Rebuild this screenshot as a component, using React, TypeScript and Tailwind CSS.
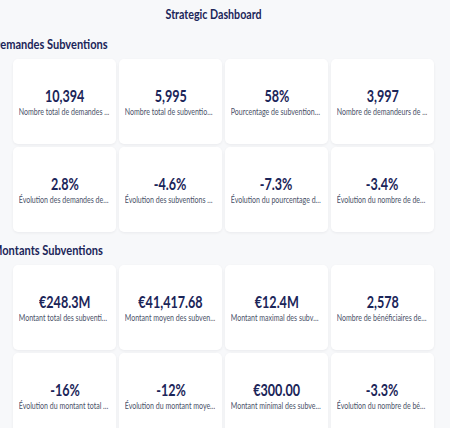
const sections = [
  {
    title: "Demandes Subventions",
    cards: [
      { value: "10,394", label: "Nombre total de demandes de subventions" },
      { value: "5,995", label: "Nombre total de subventions accordées" },
      { value: "58%", label: "Pourcentage de subventions accordées" },
      { value: "3,997", label: "Nombre de demandeurs de subventions" },
      { value: "2.8%", label: "Évolution des demandes de subventions" },
      { value: "-4.6%", label: "Évolution des subventions accordées" },
      { value: "-7.3%", label: "Évolution du pourcentage de subventions" },
      { value: "-3.4%", label: "Évolution du nombre de demandeurs" },
    ],
  },
  {
    title: "Montants Subventions",
    cards: [
      { value: "€248.3M", label: "Montant total des subventions" },
      { value: "€41,417.68", label: "Montant moyen des subventions" },
      { value: "€12.4M", label: "Montant maximal des subventions" },
      { value: "2,578", label: "Nombre de bénéficiaires de subventions" },
      { value: "-16%", label: "Évolution du montant total des subventions" },
      { value: "-12%", label: "Évolution du montant moyen des subventions" },
      { value: "€300.00", label: "Montant minimal des subventions" },
      { value: "-3.3%", label: "Évolution du nombre de bénéficiaires" },
    ],
  },
];

function KpiCard({ value, label }: { value: string; label: string }) {
  return (
    <div className="flex h-[85px] flex-col items-center justify-center overflow-hidden rounded-[5px] bg-white px-[6px] pt-[2px] shadow-[0_1px_3px_rgba(16,24,40,0.06)]">
      <p className="scale-x-[0.74] text-[17px] font-bold leading-[18px] text-[#1b2559]">
        {value}
      </p>
      <p className="mt-[1px] w-[128%] scale-x-[0.78] truncate text-center text-[9px] leading-[12px] text-[#4a5168]">
        {label}
      </p>
    </div>
  );
}

export default function App() {
  return (
    <main className="min-h-screen overflow-hidden bg-[#f7f8fa] pl-[13px] pr-[16px] font-['Lato',sans-serif]">
      <h1 className="pr-[20px] pt-[6px] text-center text-[13px] leading-[16px]">
        <span className="inline-block scale-x-[0.82] font-bold text-[#1b2559]">
          Strategic Dashboard
        </span>
      </h1>
      {sections.map((section, i) => (
        <section key={section.title} className={i === 0 ? "mt-[14px]" : "mt-[10px]"}>
          <h2 className="-ml-[21px] mb-[7px] origin-left scale-x-[0.85] whitespace-nowrap text-[13px] font-bold leading-[16px] text-[#1b2559]">
            {section.title}
          </h2>
          <div className="grid grid-cols-4 gap-[3px]">
            {section.cards.map((c) => (
              <KpiCard key={c.label} value={c.value} label={c.label} />
            ))}
          </div>
        </section>
      ))}
    </main>
  );
}
